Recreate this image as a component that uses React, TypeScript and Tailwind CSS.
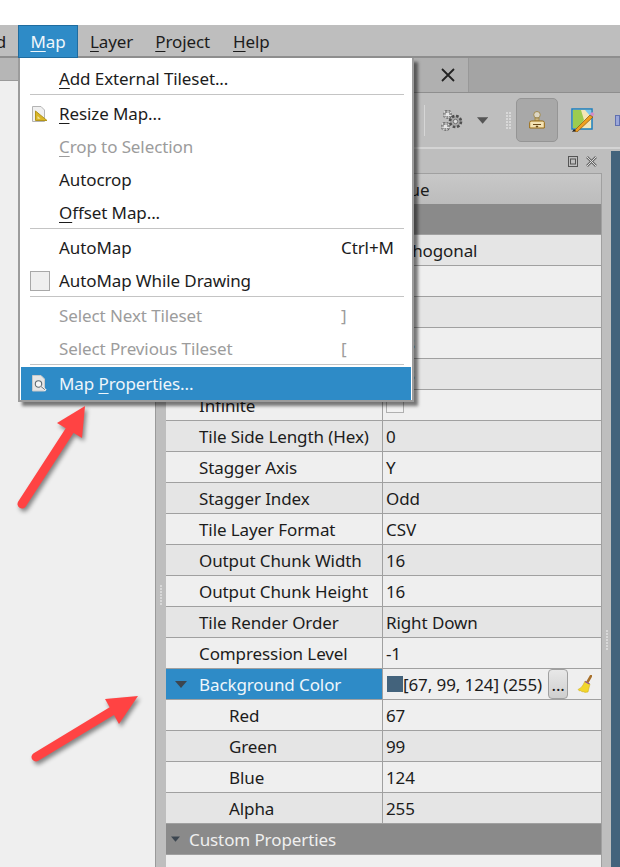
import React from "react";

const FONT = { fontFamily: '"Noto Sans", "Open Sans", sans-serif' };

type Row = { name: string; value?: React.ReactNode; sub?: boolean };

const upperRows: Row[] = [
  { name: "Orientation", value: "Orthogonal" },
  { name: "Width", value: "30" },
  { name: "Height", value: "20" },
  { name: "Tile Width", value: "128" },
  { name: "Tile Height", value: "128" },
  { name: "Infinite", value: <span className="block w-[18px] h-[17px] border border-[#b0b0b0] bg-[#f2f2f2] mt-[6px]" /> },
  { name: "Tile Side Length (Hex)", value: "0" },
  { name: "Stagger Axis", value: "Y" },
  { name: "Stagger Index", value: "Odd" },
  { name: "Tile Layer Format", value: "CSV" },
  { name: "Output Chunk Width", value: "16" },
  { name: "Output Chunk Height", value: "16" },
  { name: "Tile Render Order", value: "Right Down" },
  { name: "Compression Level", value: "-1" },
];

const colorRows: Row[] = [
  { name: "Red", value: "67", sub: true },
  { name: "Green", value: "99", sub: true },
  { name: "Blue", value: "124", sub: true },
  { name: "Alpha", value: "255", sub: true },
];

function PropRow({ row, shade }: { row: Row; shade: boolean }) {
  return (
    <div className={`flex h-[31px] border-b border-[#a0a0a0] text-[#1c1c1c] ${shade ? "bg-[#e5e5e5]" : "bg-[#efefef]"}`}>
      <div className={`w-[217px] border-r border-[#a0a0a0] leading-[31px] whitespace-nowrap ${row.sub ? "pl-[63px]" : "pl-[33px]"}`}>{row.name}</div>
      <div className="flex-1 pl-[3px] leading-[31px] whitespace-nowrap">{row.value}</div>
    </div>
  );
}

function Caret({ className, w = 12, h = 7 }: { className: string; w?: number; h?: number }) {
  return (
    <svg className={className} viewBox="0 0 12 7" width={w} height={h}>
      <path d="M0 0h12L6 7z" fill="#3c4650" />
    </svg>
  );
}

function SectionHeader({ title }: { title: string }) {
  return (
    <div className="flex items-center h-[31px] bg-[#8a8a8a] text-[#efefef] border-b border-[#a0a0a0] whitespace-nowrap">
      <Caret className="ml-[5px] mr-[9px]" w={9} h={6} />
      <span className="pt-[2px]">{title}</span>
    </div>
  );
}

function ResizeIcon() {
  return (
    <svg width="16" height="16" viewBox="0 0 16 16">
      <path d="M.5.500h8.500l3.500 3.500v11.500H.5z" fill="#f0f0f0" stroke="#b4b4b4" />
      <path d="M3.500 5 15 14.500H3.500z" fill="#d9b526" stroke="#b3951c" />
      <path d="M5.500 10l3 2.800h-3z" fill="#f3e6a0" />
    </svg>
  );
}

function PropsIcon() {
  return (
    <svg width="16" height="17" viewBox="0 0 16 17">
      <path d="M.5.500h8.500l3.500 3.500v12H.5z" fill="#e6e6e6" stroke="#c8c8c8" />
      <circle cx="6.500" cy="9" r="3.200" fill="#f7f7f7" stroke="#5f6b72" strokeWidth="1.100" />
      <path d="M8.800 11.300l5 4.200" stroke="#eeeeee" strokeWidth="2.400" />
      <path d="M8.800 11.300l4 3.400" stroke="#6b747a" strokeWidth="1" />
    </svg>
  );
}

function MenuItem({ label, u, rest, disabled, icon, shortcut, active, pre }: {
  label?: string; u?: string; rest?: string; pre?: string; disabled?: boolean; icon?: React.ReactNode; shortcut?: string; active?: boolean;
}) {
  return (
    <div className={`relative flex items-center h-[33px] ${active ? "bg-[#2e8bc7] text-[#eef6fb]" : disabled ? "text-[#9c9c9c]" : "text-[#1c1c1c]"}`}>
      <div className="w-[38px] flex justify-center shrink-0">{icon}</div>
      <span className="whitespace-nowrap">
        {pre}
        {u && <span className="underline underline-offset-[3px]">{u}</span>}
        {rest}
        {label}
      </span>
      {shortcut && <span className="absolute left-[320px] whitespace-nowrap">{shortcut}</span>}
    </div>
  );
}

function Sep() {
  return <div className="h-[2px] ml-[9px] mr-[7px] -mt-[1px] mb-[1px] relative border-t border-[#c4c4c4]" />;
}

function Menu() {
  return (
    <div className="absolute left-[18px] top-[58px] w-[396px] h-[344px] bg-white border-2 border-[#9c9c9c] border-t-0 shadow-[4px_4px_3px_rgba(0,0,0,0.5)] pt-[4px] px-[1px]">
      <MenuItem u="A" rest="dd External Tileset..." />
      <Sep />
      <MenuItem u="R" rest="esize Map..." icon={<ResizeIcon />} />
      <MenuItem u="C" rest="rop to Selection" disabled />
      <MenuItem label="Autocrop" />
      <MenuItem u="O" rest="ffset Map..." />
      <Sep />
      <MenuItem label="AutoMap" shortcut="Ctrl+M" />
      <MenuItem label="AutoMap While Drawing" icon={<span className="block w-[20px] h-[20px] border border-[#a8a8a8] bg-[#efefef]" />} />
      <Sep />
      <MenuItem label="Select Next Tileset" shortcut="]" disabled />
      <MenuItem label="Select Previous Tileset" shortcut="[" disabled />
      <Sep />
      <MenuItem pre="Map " u="P" rest="roperties..." icon={<PropsIcon />} active />
    </div>
  );
}

function Arrow({ points, tail }: { points: string; tail: string }) {
  return (
    <g style={{ filter: "drop-shadow(2px 3px 2px rgba(0,0,0,0.45))" }}>
      <path d={tail} stroke="#ff4343" strokeWidth="9" strokeLinecap="round" fill="none" />
      <polygon points={points} fill="#ff4343" />
    </g>
  );
}

function Dots({ cols, rows, className }: { cols: number; rows: number; className: string }) {
  return (
    <div className={`grid gap-[1px] ${className}`} style={{ gridTemplateColumns: `repeat(${cols}, 2px)` }}>
      {Array.from({ length: cols * rows }).map((_, i) => (
        <span key={i} className="block w-[2px] h-[2px] bg-[#d8d8d8]" />
      ))}
    </div>
  );
}

function Gears() {
  return (
    <svg width="22" height="21" viewBox="0 0 22 21">
      <circle cx="14.500" cy="11.500" r="5.500" fill="#a8a8a8" stroke="#4f4f4f" strokeWidth="2.600" strokeDasharray="2.600 1.700" />
      <circle cx="14.500" cy="11.500" r="2.200" fill="#dedede" stroke="#707070" />
      <rect x="3.500" y="1.500" width="6" height="6" rx="1" fill="#e6e6e6" stroke="#333" strokeWidth="1.800" strokeDasharray="2 1" />
      <rect x="3.500" y="1.500" width="6" height="6" fill="none" stroke="#f2f2f2" strokeWidth=".5" />
      <rect x="1.500" y="13.500" width="6" height="6" rx="1" fill="#e6e6e6" stroke="#333" strokeWidth="1.800" strokeDasharray="2 1" />
      <rect x="1.500" y="13.500" width="6" height="6" fill="none" stroke="#f2f2f2" strokeWidth=".5" />
    </svg>
  );
}

function Stamp() {
  return (
    <svg width="16" height="18" viewBox="0 0 16 18">
      <circle cx="8" cy="3.800" r="3.300" fill="#dcd6c4" stroke="#a08a50" />
      <rect x="6" y="7" width="4" height="3" fill="#c9b27a" stroke="#a08a50" />
      <path d="M.7 11.500q0-1.500 2-1.500h10.600q2 0 2 1.500v5.500H.7z" fill="#f3e2b4" stroke="#9a6a10" />
      <path d="M4 13.500h8M7 15l1 1 1-1" stroke="#6a4a18" strokeWidth="1.200" fill="none" />
    </svg>
  );
}

function MapEdit() {
  return (
    <svg width="24" height="24" viewBox="0 0 24 24">
      <rect x="1" y="1" width="20" height="20" fill="#f3e6b8" stroke="#1a7fc0" strokeWidth="1.500" />
      <path d="M2 2h8l3 10-6 8H2z" fill="#9ccc50" />
      <path d="M14 2h6v7z" fill="#7cc8ee" />
      <path d="M3 23 19 7l3 2L6 24z" fill="#f0a020" stroke="#8a5208" strokeWidth=".7" />
      <path d="M19 6l2-2 2.500 2-2 2.500z" fill="#d68ac8" />
      <path d="M1 24l2-3 2 2z" fill="#222" />
    </svg>
  );
}

function Broom() {
  return (
    <svg width="15" height="18" viewBox="0 0 15 18">
      <path d="M14 1l-3.500 6" stroke="#a8702a" strokeWidth="2.500" strokeLinecap="round" />
      <path d="M8 6l5 3-2 8q-3.500 1-5-.5l-1 .5-1-1.500-1.500.5-1.500-1.500q3.500-1.500 5-4.500z" fill="#f2d62a" stroke="#c9a81c" strokeWidth=".5" />
      <path d="M8 6.500l4.500 2.500" stroke="#8a4a9a" strokeWidth="1.200" />
    </svg>
  );
}

export default function App() {
  return (
    <div className="relative w-[620px] h-[867px] overflow-hidden bg-white flex flex-col text-[17px] tracking-[-0.1px]" style={FONT}>
      <div className="h-[25px] shrink-0 bg-white" />

      {/* Menu bar */}
      <div className="h-[33px] shrink-0 flex bg-[#bebebe] border-b-2 border-[#8e8e8e] text-[#1c1c1c] leading-[33px]">
        <div className="w-[18px] overflow-hidden flex justify-end pr-[12px]"><span>d</span></div>
        <div className="w-[60px] h-[33px] bg-[#2e8bc7] border border-[#1f6c9f] text-[#eef6fb] text-center leading-[31px]"><span className="underline underline-offset-[3px]">M</span>ap</div>
        <div className="ml-[12px]"><span className="underline underline-offset-[3px]">L</span>ayer</div>
        <div className="ml-[22px]"><span className="underline underline-offset-[3px]">P</span>roject</div>
        <div className="ml-[23px]"><span className="underline underline-offset-[3px]">H</span>elp</div>
      </div>

      {/* Body */}
      <div className="flex-1 flex min-h-0">
        {/* Left dock */}
        <div className="w-[166px] shrink-0 flex flex-col">
          <div className="h-[23px] shrink-0 bg-[#b6b6b6] border-b border-[#9a9a9a]" />
          <div className="flex-1 flex min-h-0">
            <div className="flex-1 bg-[#efefef]" />
            <div className="w-[11px] bg-[#bebebe] border-l border-[#9a9a9a] flex items-end justify-center pb-[262px]">
              <Dots cols={1} rows={7} className="" />
            </div>
          </div>
        </div>

        {/* Right side */}
        <div className="flex-1 flex flex-col min-w-0">
          {/* Tab bar */}
          <div className="h-[35px] shrink-0 flex bg-[#a4a4a4] border-b border-[#8e8e8e]">
            <div className="w-[303px] bg-[#b0b0b0] border-r border-[#989898] flex items-center justify-end pr-[13px] relative">
              <svg width="14" height="14" viewBox="0 0 14 14">
                <path d="M1 1l12 12M13 1L1 13" stroke="#222" strokeWidth="1.800" />
              </svg>
            </div>
          </div>

          {/* Toolbar */}
          <div className="h-[56px] shrink-0 flex items-center bg-[#bebebe] border-b-2 border-[#d4d4d4]">
            <div className="ml-[258px] w-[1px] h-[31px] bg-[#d6d6d6]" />
            <div className="ml-[16px]"><Gears /></div>
            <svg className="ml-[14px]" width="12" height="7" viewBox="0 0 12 7"><path d="M0 0h12L6 7z" fill="#555" /></svg>
            <Dots cols={2} rows={6} className="ml-[18px]" />
            <div className="ml-[5px] w-[44px] h-[44px] rounded-[5px] bg-[#a8a8a8] border border-[#959595] flex items-center justify-center"><Stamp /></div>
            <div className="ml-[13px]"><MapEdit /></div>
            <div className="ml-[20px] w-[5px] h-[11px] bg-[#9aa6d8] border border-[#6070b0] shrink-0" />
          </div>

          {/* Dock + map */}
          <div className="flex-1 flex min-h-0">
            <div className="w-[436px] shrink-0 flex flex-col bg-[#bebebe]">
              <div className="h-[24px] shrink-0 flex items-center justify-end gap-[8px] pr-[5px]">
                <svg width="10" height="11" viewBox="0 0 10 11"><rect x=".5" y=".5" width="9" height="10" fill="none" stroke="#555" /><rect x="2.500" y="3" width="5" height="5" fill="none" stroke="#555" /></svg>
                <svg width="11" height="11" viewBox="0 0 11 11"><path d="M1 1l9 9M10 1l-9 9" stroke="#6a6a6a" strokeWidth="2.600" /><path d="M1 1l9 9M10 1l-9 9" stroke="#dcdcdc" strokeWidth="1" /></svg>
              </div>
              <div className="flex-1 flex flex-col bg-[#efefef] border-r border-[#a0a0a0] min-h-0">
                <div className="h-[31px] shrink-0 flex bg-gradient-to-b from-[#c8c8c8] to-[#bcbcbc] border-t border-[#a0a0a0] text-[#1c1c1c]">
                  <div className="w-[217px]" />
                  <div className="pl-[3px] leading-[31px]">Value</div>
                </div>
                <SectionHeader title="Map" />
                {upperRows.map((r, i) => <PropRow key={r.name} row={r} shade={i % 2 === 0} />)}
                <div className="flex h-[31px] border-b border-[#a0a0a0] bg-[#efefef] text-[#1c1c1c]">
                  <div className="w-[217px] border-r border-[#a0a0a0] bg-[#2e8bc7] text-[#eef6fb] flex items-center whitespace-nowrap">
                    <Caret className="ml-[9px] mr-[12px]" />
                    <span className="pt-[1px]">Background Color</span>
                  </div>
                  <div className="flex-1 flex items-center pl-[4px] whitespace-nowrap">
                    <span className="w-[16px] h-[16px] bg-[#43637c]" />
                    <span className="pt-[1px]">[67, 99, 124] (255)</span>
                    <span className="ml-[6px] w-[20px] h-[30px] rounded-[4px] border border-[#a0a0a0] bg-gradient-to-b from-[#e8e8e8] to-[#cfcfcf] text-center leading-[30px]">...</span>
                    <span className="ml-[9px] flex"><Broom /></span>
                  </div>
                </div>
                {colorRows.map((r, i) => <PropRow key={r.name} row={r} shade={i % 2 === 1} />)}
                <SectionHeader title="Custom Properties" />
              </div>
            </div>
            <div className="w-[9px] shrink-0 bg-[#bebebe] flex justify-center items-end pb-[217px]">
              <Dots cols={1} rows={7} className="" />
            </div>
            <div className="flex-1 bg-[#bebebe] pt-[2px] flex">
              <div className="flex-1 bg-[#43637c]" />
            </div>
          </div>
        </div>
      </div>

      <Menu />

      <svg className="absolute inset-0 pointer-events-none" width="620" height="867" viewBox="0 0 620 867">
        <Arrow points="85,406 57,423 82,438" tail="M22,504 L70,430" />
        <Arrow points="138,696 105,699 119,724" tail="M36,757 L112,711" />
      </svg>
    </div>
  );
}
